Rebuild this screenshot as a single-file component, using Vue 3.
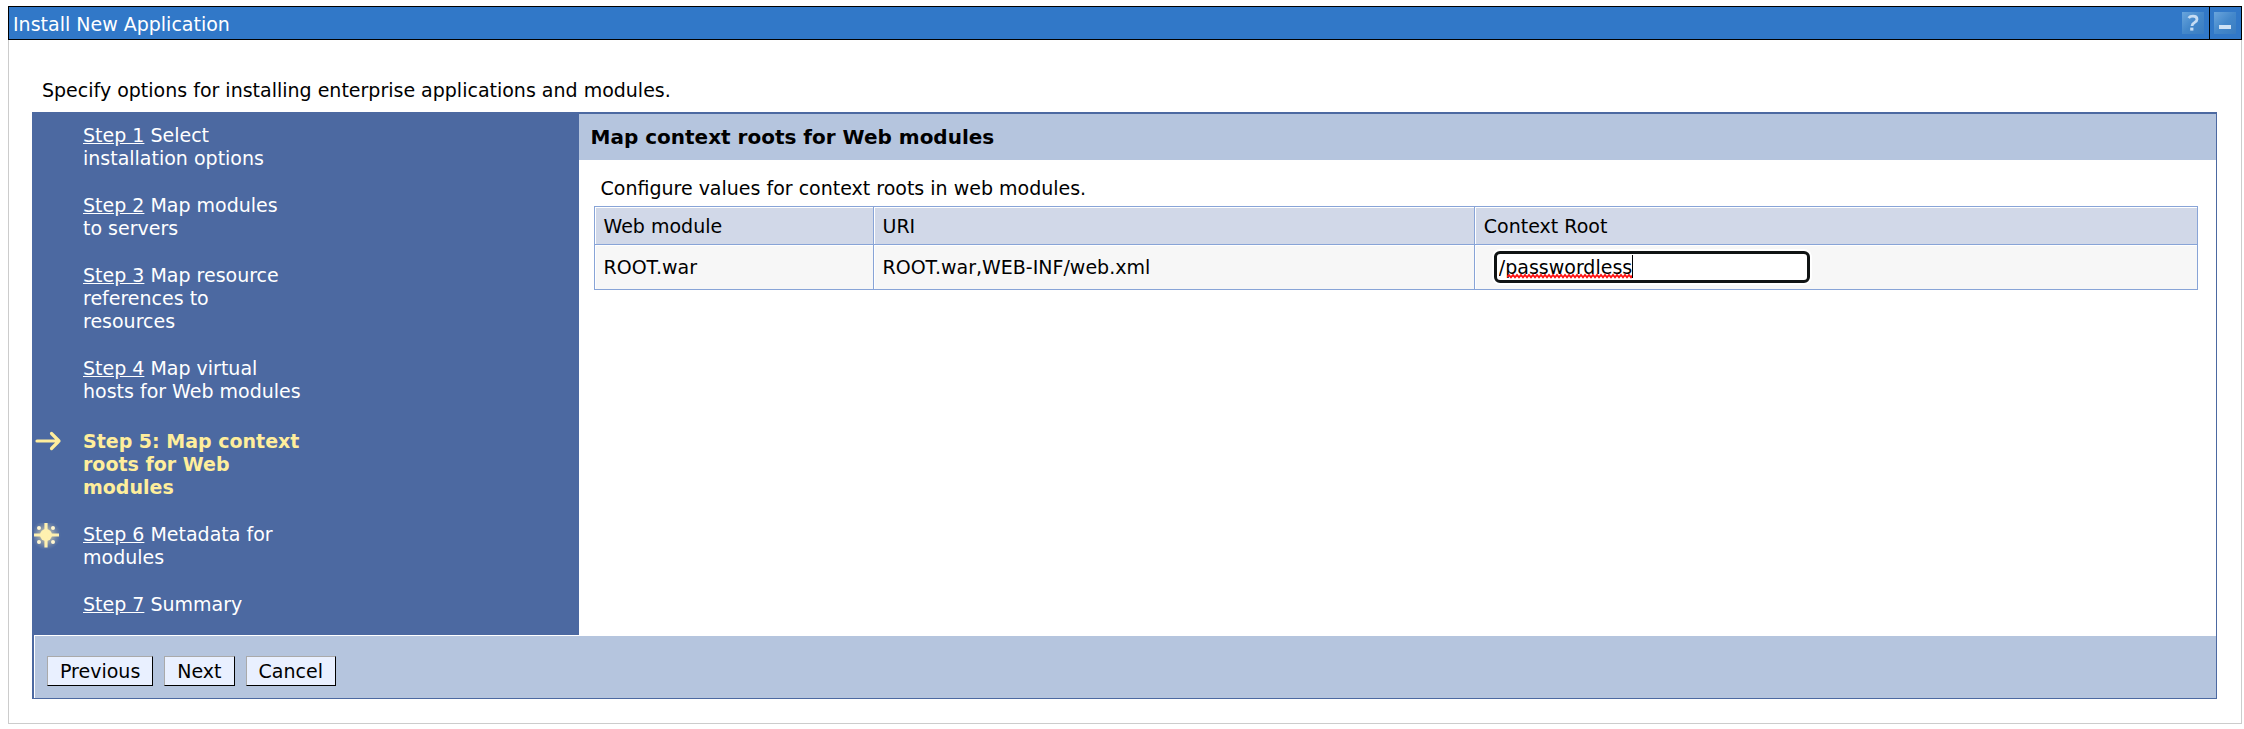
<script setup>
import { ref } from 'vue'

const steps = [
  { link: 'Step 1', text: 'Select installation options' },
  { link: 'Step 2', text: 'Map modules to servers' },
  { link: 'Step 3', text: 'Map resource references to resources' },
  { link: 'Step 4', text: 'Map virtual hosts for Web modules' },
  { text: 'Step 5: Map context roots for Web modules', current: true },
  { link: 'Step 6', text: 'Metadata for modules', required: true },
  { link: 'Step 7', text: 'Summary' },
]
const contextRoot = ref('/passwordless')
</script>

<template>
  <section class="portlet">
    <header class="bar">
      <h1>Install New Application</h1>
      <button class="tool" type="button" aria-label="Help">
        <svg width="22" height="22" viewBox="0 0 22 22">
          <defs>
            <linearGradient id="tile" x1="0" y1="0" x2="1" y2="1">
              <stop offset="0" stop-color="#6aa5dc" />
              <stop offset=".5" stop-color="#4488cb" />
              <stop offset="1" stop-color="#3a7cc0" />
            </linearGradient>
          </defs>
          <rect width="22" height="22" fill="url(#tile)" />
          <path d="M6.6 6Q8 4.2 11 4.2Q15 4.2 15 7.2Q15 9 12.6 10.4Q10.2 11.6 10 14" fill="none" stroke="#c6dcf3" stroke-width="2.8" />
          <rect x="8.2" y="15.6" width="3.2" height="3" fill="#c6dcf3" />
        </svg>
      </button>
      <button class="tool last" type="button" aria-label="Minimize">
        <svg width="22" height="22" viewBox="0 0 22 22">
          <rect width="22" height="22" fill="url(#tile)" />
          <rect x="5" y="13" width="12" height="4" fill="#cfe2f5" />
        </svg>
      </button>
    </header>

    <main class="body">
      <p class="intro">Specify options for installing enterprise applications and modules.</p>
      <div class="wizard">
        <div class="top">
          <nav class="side">
            <ol>
              <li v-for="(s, i) in steps" :key="i" :class="{ current: s.current }">
                <span class="mark">
                  <svg v-if="s.current" width="28" height="23" viewBox="0 0 28 23">
                    <path d="M3 11H25M17.5 3.5L25 11L17.5 18.5" fill="none" stroke="#ffee9c" stroke-width="3.2" stroke-linecap="round" stroke-linejoin="round" />
                  </svg>
                  <svg v-if="s.required" width="28" height="28" viewBox="0 0 28 28">
                    <defs>
                      <radialGradient id="halo">
                        <stop offset=".3" stop-color="#d3cfae" stop-opacity=".8" />
                        <stop offset="1" stop-color="#8f9db0" stop-opacity="0" />
                      </radialGradient>
                    </defs>
                    <circle cx="12" cy="12" r="15" fill="url(#halo)" />
                    <circle cx="12" cy="12" r="6" fill="#fff1b0" />
                    <path d="M10.4 0H13.6V24.5H10.4ZM0 10.4H25V13.6H0Z" fill="#fff1b0" />
                    <g fill="#fff6d0">
                      <circle cx="5" cy="5" r="2" />
                      <circle cx="19" cy="5" r="2" />
                      <circle cx="5" cy="19" r="2" />
                      <circle cx="19" cy="19" r="2" />
                    </g>
                  </svg>
                </span>
                <span class="label"><a v-if="s.link" href="#">{{ s.link }}</a> {{ s.text }}</span>
              </li>
            </ol>
          </nav>
          <div class="content">
            <h2>Map context roots for Web modules</h2>
            <p class="hint">Configure values for context roots in web modules.</p>
            <table>
              <thead>
                <tr>
                  <th class="c1" scope="col">Web module</th>
                  <th class="c2" scope="col">URI</th>
                  <th id="root-label" scope="col">Context Root</th>
                </tr>
              </thead>
              <tbody>
                <tr>
                  <td>ROOT.war</td>
                  <td>ROOT.war,WEB-INF/web.xml</td>
                  <td>
                    <div class="field">
                      <input v-model="contextRoot" type="text" spellcheck="false" aria-labelledby="root-label" />
                      <svg class="typo" width="126" height="26" viewBox="0 0 126 26">
                        <path d="M0 22l2 -2l2 2.4l2 -2.4l2 2.4l2 -2.4l2 2.4l2 -2.4l2 2.4l2 -2.4l2 2.4l2 -2.4l2 2.4l2 -2.4l2 2.4l2 -2.4l2 2.4l2 -2.4l2 2.4l2 -2.4l2 2.4l2 -2.4l2 2.4l2 -2.4l2 2.4l2 -2.4l2 2.4l2 -2.4l2 2.4l2 -2.4l2 2.4l2 -2.4l2 2.4l2 -2.4l2 2.4l2 -2.4l2 2.4l2 -2.4l2 2.4l2 -2.4l2 2.4l2 -2.4l2 2.4l2 -2.4l2 2.4l2 -2.4l2 2.4l2 -2.4l2 2.4l2 -2.4l2 2.4l2 -2.4l2 2.4l2 -2.4l2 2.4l2 -2.4l2 2.4l2 -2.4l2 2.4l2 -2.4l2 2.4l2 -2.4l2 2.4l2 -2.4l2 2.4" fill="none" stroke="#f11" stroke-width="1.8" />
                        <path d="M125.5 0V23" stroke="#000" />
                      </svg>
                    </div>
                  </td>
                </tr>
              </tbody>
            </table>
          </div>
        </div>
        <footer class="actions">
          <button type="button">Previous</button>
          <button type="button">Next</button>
          <button type="button">Cancel</button>
        </footer>
      </div>
    </main>
  </section>
</template>

<style>
body {
  background: #fff;
}
</style>

<style scoped>
.portlet {
  margin: 6px 2px 0 8px;
  font: 19px/23px Verdana, "DejaVu Sans", sans-serif;
  color: #000;
}
.portlet * {
  box-sizing: border-box;
}
h1, h2, p, ol {
  margin: 0;
  padding: 0;
}
.bar {
  display: flex;
  height: 34px;
  background: #3178c8;
  border: 1px solid #000;
}
h1 {
  flex: 1;
  padding: 6px 4px;
  color: #fff;
  font-size: 19px;
  line-height: 23px;
  font-weight: 400;
}
.tool {
  display: flex;
  padding: 5px 5px 5px 4px;
  border: 0;
  background: none;
}
.tool.last {
  border-left: 1px solid #000;
}
.body {
  border: 1px solid #ccc;
  border-top: 0;
  padding: 39px 24px 24px 23px;
}
.intro {
  padding: 0 10px 10px;
}
.wizard {
  border: solid #4c69a1;
  border-width: 2px 1px 1px 2px;
}
.top {
  display: flex;
}
.side {
  width: calc(25% - 1px);
  padding: 10px 0 19px;
  background: #4c69a1;
}
ol {
  display: flex;
  flex-direction: column;
  gap: 24px;
  list-style: none;
}
li {
  display: flex;
  color: #fff;
}
.mark {
  width: 49px;
  height: 23px;
}
.mark svg {
  display: block;
}
.label {
  width: 218px;
}
.label a {
  color: inherit;
  text-decoration: underline;
}
.current {
  margin-top: 3px;
  color: #ffee9c;
  font-weight: 700;
}
.content {
  flex: 1;
}
h2 {
  padding: 12px;
  height: 46px;
  background: #b5c5de;
  font-size: 20px;
  line-height: 23px;
}
.hint {
  padding: 17px 22px 6px;
}
table {
  width: calc(100% - 33px);
  margin-left: 15px;
  border-collapse: collapse;
  table-layout: fixed;
}
th, td {
  padding: 6px 9px;
  border: 1px solid #88a4d7;
  box-shadow: inset 1px 1px #fff;
  text-align: left;
  font-weight: 400;
}
th {
  height: 37px;
  padding-top: 8px;
  background: #d1d8e8;
}
td {
  height: 45px;
  background: #f7f7f7;
}
.c1 {
  width: 17.4%;
}
.c2 {
  width: 37.5%;
}
.field {
  position: relative;
  width: 316px;
  margin-left: 10px;
}
input {
  display: block;
  width: 100%;
  height: 32px;
  padding: 0 2px;
  border: 3px solid #101414;
  border-radius: 6px;
  box-shadow: 0 0 0 2px #fff;
  outline: 0;
  background: #fff;
  font: inherit;
  color: #000;
}
.typo {
  position: absolute;
  left: 13px;
  top: 4px;
}
.actions {
  display: flex;
  gap: 11px;
  padding: 20px 12px 12px;
  border: solid #fff;
  border-width: 1px 0 0 1px;
  background: #b5c5de;
}
.actions button {
  height: 30px;
  padding: 0 12px;
  border: 1px solid #000;
  border-top-color: #aaa;
  border-left-color: #aaa;
  background: #e9f0ff;
  font: inherit;
  color: #000;
}
</style>
